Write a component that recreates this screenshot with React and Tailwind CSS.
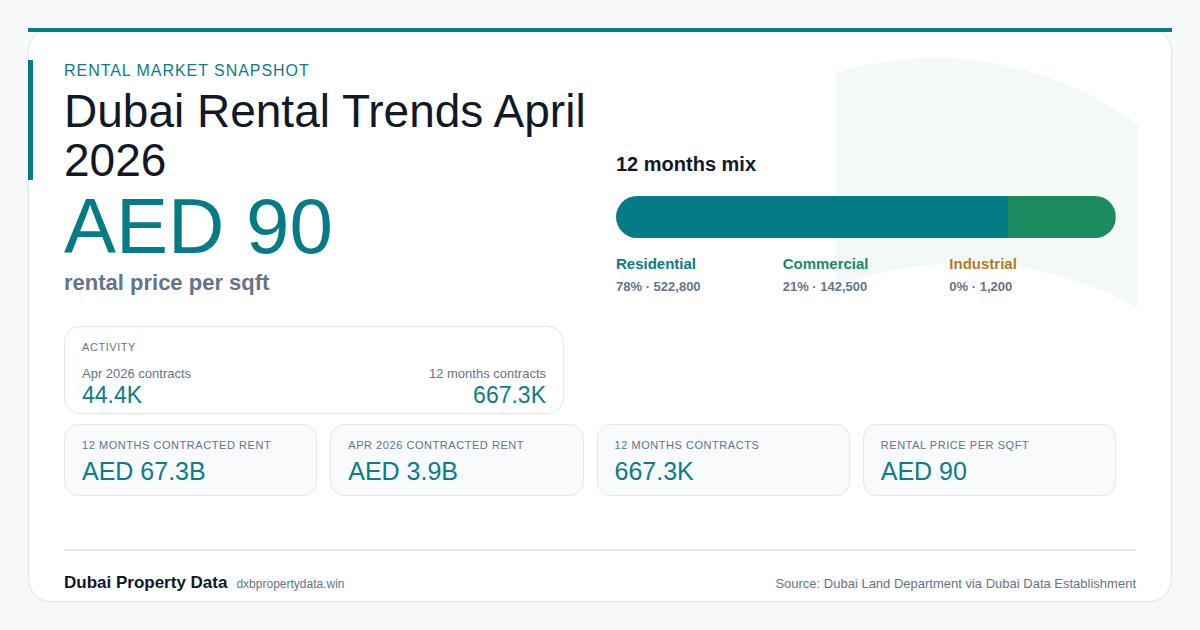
import React from "react";

// Rental market snapshot card (share image layout)

const mix = [
  { label: "Residential", pct: 78, count: "522,800", value: 522800, bar: "bg-[#047b85]", text: "text-[#0a7c86]" },
  { label: "Commercial", pct: 21, count: "142,500", value: 142500, bar: "bg-[#1b8a5e]", text: "text-[#1a8a5e]" },
  { label: "Industrial", pct: 0, count: "1,200", value: 1200, bar: "bg-[#c0802a]", text: "text-[#b7791f]" },
];

const stats = [
  { label: "12 months contracted rent", value: "AED 67.3B" },
  { label: "Apr 2026 contracted rent", value: "AED 3.9B" },
  { label: "12 months contracts", value: "667.3K" },
  { label: "Rental price per sqft", value: "AED 90" },
];

function MixBar() {
  const total = mix.reduce((a, m) => a + m.value, 0);
  return (
    <div className="mt-[18px] flex h-[42px] w-full overflow-hidden rounded-full">
      {mix.map((m) => (
        <div key={m.label} className={m.bar} style={{ width: `${(m.value / total) * 100}%` }} />
      ))}
    </div>
  );
}

export default function App() {
  return (
    <div className="min-h-screen bg-[#f6f8fa] p-[28px] font-['Liberation_Sans',Arial,sans-serif]">
      <div className="relative flex h-[574px] flex-col rounded-3xl border border-[#e2e8f0] bg-white px-[35px] pt-[30px] pb-[5px] shadow-[0_1px_2px_rgba(15,23,42,0.04)]">
        {/* top rule + left accent */}
        <div className="absolute -top-px -left-px -right-px h-1 bg-[#047b85]" />
        <div className="absolute -left-px top-[31px] h-[120px] w-[5px] bg-[#047b85]" />

        {/* faint background shape */}
        <svg className="absolute inset-0 h-full w-full" viewBox="29 29 1142 572" preserveAspectRatio="none">
          <path d="M836,73 A340,340 0 0 1 1138,125 L1138,308 A360,360 0 0 0 836,287 Z" fill="#f3f8f8" />
        </svg>

        <div className="relative flex items-end gap-4 pr-5">
          <div className="flex-1">
            <div className="text-[16px] leading-6 tracking-[0.06em] text-[#0b7d87]">RENTAL MARKET SNAPSHOT</div>
            <h1 className="mt-[3.5px] text-[46px] leading-[49px] text-[#111827]">Dubai Rental Trends April 2026</h1>
            <div className="mt-[2px] text-[78px] leading-[78px] text-[#047b85]">AED 90</div>
            <div className="mt-[5.5px] text-[22px] font-bold leading-[26px] text-[#64748b]">rental price per sqft</div>
          </div>

          <div className="w-[500px] shrink-0">
            <div className="text-[20px] font-bold leading-7 text-[#111827]">12 months mix</div>
            <MixBar />
            <div className="mt-4 grid grid-cols-3">
              {mix.map((m) => (
                <div key={m.label}>
                  <div className={"text-[15px] font-bold leading-5 " + m.text}>{m.label}</div>
                  <div className="mt-1 text-[13px] font-bold leading-[18px] text-[#64748b]">
                    {m.pct}% · {m.count}
                  </div>
                </div>
              ))}
            </div>
          </div>
        </div>

        {/* activity */}
        <div className="relative mt-[30px] w-[500px] rounded-2xl border border-[#e2e8f0] bg-white px-[17px] pt-[12px] pb-[5px]">
          <div className="text-[11px] leading-4 tracking-[0.05em] text-[#64748b]">ACTIVITY</div>
          <div className="mt-[11px] flex justify-between">
            <div>
              <div className="text-[13px] leading-4 text-[#64748b]">Apr 2026 contracts</div>
              <div className="text-[23px] leading-[26px] text-[#0b7d87]">44.4K</div>
            </div>
            <div className="text-right">
              <div className="text-[13px] leading-4 text-[#64748b]">12 months contracts</div>
              <div className="text-[23px] leading-[26px] text-[#0b7d87]">667.3K</div>
            </div>
          </div>
        </div>

        {/* stat cards */}
        <div className="relative mt-[10px] grid grid-cols-4 gap-[13px] pr-5">
          {stats.map((s) => (
            <div key={s.label} className="rounded-[14px] border border-[#e2e8f0] bg-[#f8fafc] px-[17px] pt-[13px] pb-[11px]">
              <div className="text-[11px] uppercase leading-[14px] tracking-[0.05em] text-[#64748b]">{s.label}</div>
              <div className="mt-[6px] text-[25px] leading-[26px] text-[#0b7d87]">{s.value}</div>
            </div>
          ))}
        </div>

        {/* footer */}
        <div className="relative mt-auto flex items-baseline justify-between border-t-2 border-[#e2e8f0] pt-5 leading-6">
          <div className="flex items-baseline gap-[9px]">
            <span className="text-[17px] font-bold text-[#111827]">Dubai Property Data</span>
            <span className="text-[12px] text-[#64748b]">dxbpropertydata.win</span>
          </div>
          <span className="text-[13px] text-[#64748b]">Source: Dubai Land Department via Dubai Data Establishment</span>
        </div>
      </div>
    </div>
  );
}
